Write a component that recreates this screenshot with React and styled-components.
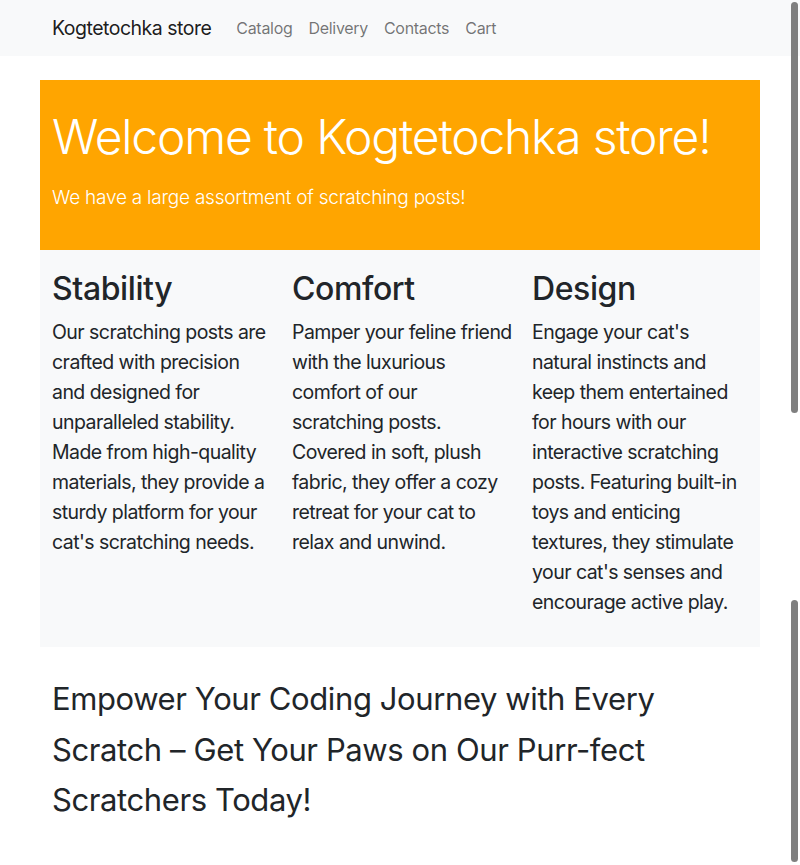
import React from "react";
import styled, { createGlobalStyle } from "styled-components";

const GlobalStyle = createGlobalStyle`
  html, body {
    margin: 0;
    padding: 0;
    overflow: hidden;
    background: #fff;
  }
  body {
    font-family: Inter, "Noto Sans", sans-serif;
    color: #212529;
  }
  * {
    box-sizing: border-box;
  }
`;

const features = [
  {
    title: "Stability",
    lines: [
      "Our scratching posts are",
      "crafted with precision",
      "and designed for",
      "unparalleled stability.",
      "Made from high-quality",
      "materials, they provide a",
      "sturdy platform for your",
      "cat's scratching needs.",
    ],
  },
  {
    title: "Comfort",
    lines: [
      "Pamper your feline friend",
      "with the luxurious",
      "comfort of our",
      "scratching posts.",
      "Covered in soft, plush",
      "fabric, they offer a cozy",
      "retreat for your cat to",
      "relax and unwind.",
    ],
  },
  {
    title: "Design",
    lines: [
      "Engage your cat's",
      "natural instincts and",
      "keep them entertained",
      "for hours with our",
      "interactive scratching",
      "posts. Featuring built-in",
      "toys and enticing",
      "textures, they stimulate",
      "your cat's senses and",
      "encourage active play.",
    ],
  },
];

const navLinks = ["Catalog", "Delivery", "Contacts", "Cart"];

const App = () => {
  return (
    <>
      <GlobalStyle />
      <Navbar>
        <Container>
          <Brand href="#">Kogtetochka store</Brand>
          <NavList>
            {navLinks.map((link) => (
              <NavLink key={link} href="#">
                {link}
              </NavLink>
            ))}
          </NavList>
        </Container>
      </Navbar>
      <Main>
        <Hero>
          <HeroTitle>Welcome to Kogtetochka store!</HeroTitle>
          <HeroLead>We have a large assortment of scratching posts!</HeroLead>
        </Hero>
        <Features>
          {features.map((f) => (
            <Feature key={f.title}>
              <FeatureTitle>{f.title}</FeatureTitle>
              <FeatureText>
                {f.lines.map((line, i) => (
                  <Line key={i}>{line}</Line>
                ))}
              </FeatureText>
            </Feature>
          ))}
        </Features>
        <Slogan>
          <Line>Empower Your Coding Journey with Every</Line>
          <Line>Scratch – Get Your Paws on Our Purr-fect</Line>
          <Line>Scratchers Today!</Line>
        </Slogan>
      </Main>
      <ScrollThumb $top={2} $height={411} />
      <ScrollThumb $top={600} $height={262} />
    </>
  );
};

const Navbar = styled.nav`
  background: #f8f9fa;
  height: 56px;
  display: flex;
  align-items: center;
`;

const Container = styled.div`
  width: 720px;
  margin: 0 auto;
  padding: 0 12px;
  display: flex;
  align-items: center;
`;

const Brand = styled.a`
  font-size: 19.5px;
  color: rgba(0, 0, 0, 0.9);
  text-decoration: none;
  margin-right: 17px;
  letter-spacing: -0.5px;
`;

const NavList = styled.div`
  display: flex;
`;

const NavLink = styled.a`
  font-size: 16px;
  color: rgba(0, 0, 0, 0.55);
  text-decoration: none;
  padding: 8px;
  letter-spacing: -0.3px;
`;

const Main = styled.main`
  width: 720px;
  margin: 24px auto 0;
`;

const Hero = styled.section`
  background: #ffa500;
  color: #fff;
  height: 170px;
  padding: 28px 12px 0;
`;

const HeroTitle = styled.h1`
  margin: 0 0 18px;
  font-size: 48px;
  font-weight: 300;
  line-height: 1.2;
  letter-spacing: -1.2px;
  white-space: nowrap;
`;

const HeroLead = styled.p`
  margin: 0;
  font-size: 19px;
  font-weight: 300;
  line-height: 1.5;
  letter-spacing: -0.23px;
`;

const Features = styled.section`
  background: #f8f9fa;
  height: 397px;
  display: grid;
  grid-template-columns: repeat(3, minmax(0, 1fr));
  padding-top: 20px;
`;

const Feature = styled.div`
  padding: 0 12px;
`;

const FeatureTitle = styled.h2`
  margin: 0 0 9px;
  font-size: 32px;
  font-weight: 500;
  line-height: 1.2;
  letter-spacing: -0.4px;
`;

const FeatureText = styled.p`
  margin: 0;
  font-size: 19.5px;
  line-height: 30px;
  letter-spacing: -0.55px;
`;

const Line = styled.span`
  display: block;
  white-space: nowrap;
`;

const Slogan = styled.h3`
  margin: 0;
  padding: 27px 12px 0;
  font-size: 31px;
  font-weight: 400;
  line-height: 50.5px;
  letter-spacing: -0.4px;
`;

const ScrollThumb = styled.div`
  position: fixed;
  right: 2px;
  top: ${(p) => p.$top}px;
  height: ${(p) => p.$height}px;
  width: 7px;
  border-radius: 4px;
  background: #7f7f7f;
`;

export default App;
